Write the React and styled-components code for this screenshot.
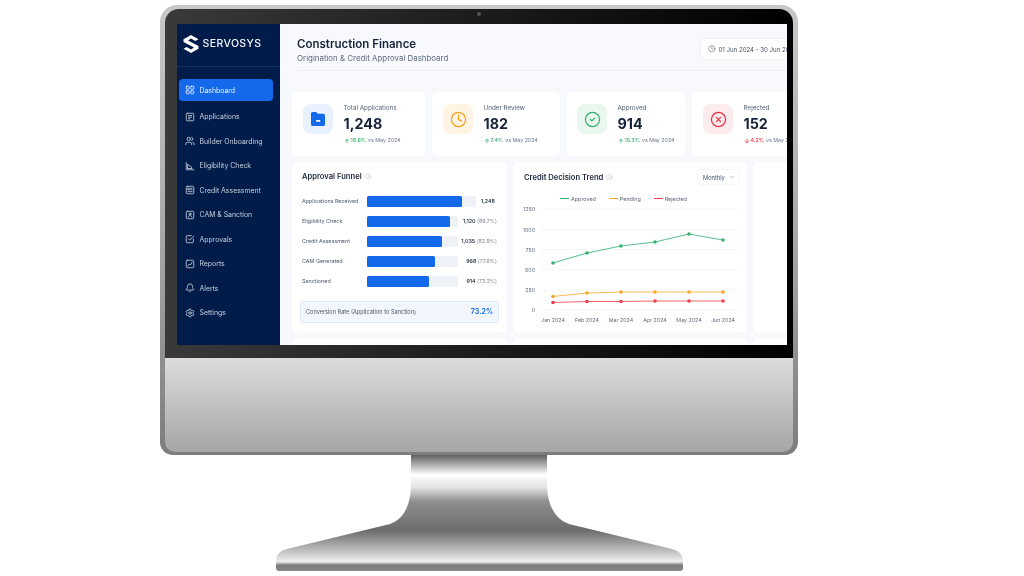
import styled, { createGlobalStyle } from "styled-components";
import {
  LayoutGrid,
  Users,
  Bell,
  Settings,
  Clock,
  CircleCheck,
  CircleX,
  Info,
  ArrowUp,
  ArrowDown,
  ChevronDown,
} from "lucide-react";

// small square nav icons, none of the packages has these exact ones
function NavGlyph({ children }) {
  return (
    <svg
      width="10"
      height="10"
      viewBox="0 0 24 24"
      fill="none"
      stroke="currentColor"
      strokeWidth="2"
      strokeLinecap="round"
      strokeLinejoin="round"
    >
      {children}
    </svg>
  );
}

const ApplicationsIcon = () => (
  <NavGlyph>
    <rect x="3" y="3" width="18" height="18" rx="2.5" />
    <path d="M8 8.5h8M8 12.5h8M8 16.5h4" />
  </NavGlyph>
);
const EligibilityIcon = () => (
  <NavGlyph>
    <path d="M3 3v18h18" />
    <path d="M7 8l4 4 2 0 4 5v1H7z" />
  </NavGlyph>
);
const CreditIcon = () => (
  <NavGlyph>
    <rect x="3" y="3" width="18" height="18" rx="2.5" />
    <path d="M7.5 7.5h4v4h-4zM14 8h3M14 11.5h3M7.5 16h9.5" />
  </NavGlyph>
);
const CamIcon = () => (
  <NavGlyph>
    <rect x="3" y="3" width="18" height="18" rx="2.5" />
    <circle cx="12" cy="9.5" r="2.5" />
    <path d="M7.5 17c.5-2.5 2-3.5 4.5-3.5s4 1 4.5 3.5" />
  </NavGlyph>
);
const ApprovalsIcon = () => (
  <NavGlyph>
    <path d="M20 12v7a2 2 0 0 1-2 2H5a2 2 0 0 1-2-2V6a2 2 0 0 1 2-2h10" />
    <path d="M8 11.5l3.5 3.5L21 5" />
  </NavGlyph>
);
const ReportsIcon = () => (
  <NavGlyph>
    <rect x="3" y="3" width="18" height="18" rx="2.5" />
    <path d="M7 17l3.5-5 2.5 2.5L17 8" />
  </NavGlyph>
);

const navItems = [
  { label: "Dashboard", icon: () => <LayoutGrid size={10} strokeWidth={2} />, active: true },
  { label: "Applications", icon: ApplicationsIcon },
  { label: "Builder Onboarding", icon: () => <Users size={10} strokeWidth={2} /> },
  { label: "Eligibility Check", icon: EligibilityIcon },
  { label: "Credit Assessment", icon: CreditIcon },
  { label: "CAM & Sanction", icon: CamIcon },
  { label: "Approvals", icon: ApprovalsIcon },
  { label: "Reports", icon: ReportsIcon },
  { label: "Alerts", icon: () => <Bell size={10} strokeWidth={2} /> },
  { label: "Settings", icon: () => <Settings size={10} strokeWidth={2} /> },
];

const funnel = [
  { label: "Applications Received", value: "1,248", pct: "", track: 109, fill: 95 },
  { label: "Eligibility Check", value: "1,120", pct: "(89.7%)", track: 91, fill: 83 },
  { label: "Credit Assessment", value: "1,035", pct: "(82.9%)", track: 91, fill: 75 },
  { label: "CAM Generated", value: "968", pct: "(77.6%)", track: 91, fill: 68 },
  { label: "Sanctioned", value: "914", pct: "(73.2%)", track: 91, fill: 62 },
];

const months = ["Jan 2024", "Feb 2024", "Mar 2024", "Apr 2024", "May 2024", "Jun 2024"];
const pointX = [40, 74, 108, 142, 176, 210];
const series = [
  { color: "#35b274", y: [58, 48, 41, 37, 29, 35] },
  { color: "#f9a825", y: [91.5, 88, 87, 87, 87, 87] },
  { color: "#ef3e4a", y: [97.5, 96.5, 96.5, 96, 96, 96] },
];
const ticks = [
  { label: "1250", y: 4 },
  { label: "1000", y: 24.5 },
  { label: "750", y: 44.5 },
  { label: "500", y: 64.5 },
  { label: "250", y: 85 },
  { label: "0", y: 105 },
];

function FolderIcon() {
  return (
    <svg width="14" height="14" viewBox="0 0 14 14">
      <path
        d="M1.6 0h3.6l1.6 1.8h5.6A1.6 1.6 0 0 1 14 3.4v9A1.6 1.6 0 0 1 12.4 14H1.6A1.6 1.6 0 0 1 0 12.4V1.6A1.6 1.6 0 0 1 1.6 0z"
        fill="#1469ea"
      />
      <rect x="5" y="8" width="4.4" height="1.8" rx="0.9" fill="#fff" />
    </svg>
  );
}

function Logo() {
  return (
    <svg width="16" height="18" viewBox="0 0 16 18">
      <path
        d="M8 0 15.5 4.3 12.3 6.1 8 3.6 5 5.4 15.5 11V13.7L8 18 .5 13.7 3.7 11.9 8 14.4 11 12.6 .5 7V4.3z"
        fill="#fff"
      />
    </svg>
  );
}

function Stand() {
  return (
    <StandArt width="407" height="116" viewBox="0 0 407 116">
      <defs>
        <linearGradient id="metal" x1="0" y1="0" x2="0" y2="1">
          <stop offset="0" stopColor="#5f5f5f" />
          <stop offset="0.17" stopColor="#ffffff" />
          <stop offset="0.28" stopColor="#e2e2e2" />
          <stop offset="0.4" stopColor="#8f8f8f" />
          <stop offset="0.65" stopColor="#6c6c6c" />
          <stop offset="0.78" stopColor="#a8a8a8" />
          <stop offset="0.92" stopColor="#eeeeee" />
          <stop offset="0.95" stopColor="#7a7a7a" />
          <stop offset="1" stopColor="#8a8a8a" />
        </linearGradient>
      </defs>
      <path
        d="M135 0H271V28C271 50 279 64 293 69L396 94Q407 97 407 105V113Q407 116 404 116H3Q0 116 0 113V105Q0 97 11 94L114 69C128 64 135 50 135 28Z"
        fill="url(#metal)"
      />
    </StandArt>
  );
}

function StatCard({ icon, tint, label, value, delta, down }) {
  const Arrow = down ? ArrowDown : ArrowUp;
  return (
    <Card>
      <IconTile $tint={tint}>{icon}</IconTile>
      <CardText>
        <CardLabel>{label}</CardLabel>
        <CardValue>{value}</CardValue>
        <Delta>
          <DeltaValue $down={down}>
            <Arrow size={6} strokeWidth={3} />
            {delta}
          </DeltaValue>
          vs May 2024
        </Delta>
      </CardText>
    </Card>
  );
}

function TrendChart() {
  return (
    <ChartArt width="234" height="125" viewBox="0 0 234 125">
      {ticks.map((t) => (
        <g key={t.label}>
          <line x1="27" x2="225" y1={t.y} y2={t.y} stroke="#f0f2f6" strokeWidth="0.7" />
          <text x="22" y={t.y + 2} textAnchor="end">
            {t.label}
          </text>
        </g>
      ))}
      {series.map((s) => (
        <g key={s.color}>
          <polyline
            points={s.y.map((y, i) => `${pointX[i]},${y}`).join(" ")}
            fill="none"
            stroke={s.color}
            strokeWidth="1.1"
            strokeOpacity="0.8"
          />
          {s.y.map((y, i) => (
            <circle key={i} cx={pointX[i]} cy={y} r="1.8" fill={s.color} />
          ))}
        </g>
      ))}
      {months.map((m, i) => (
        <text key={m} x={pointX[i]} y="116.5" textAnchor="middle">
          {m}
        </text>
      ))}
    </ChartArt>
  );
}

export default function App() {
  return (
    <Page>
      <GlobalStyle />
      <Monitor>
        <Bezel>
          <Camera />
          <Screen>
            <Sidebar>
              <Brand>
                <Logo />
                <BrandName>SERVOSYS</BrandName>
              </Brand>
              <Nav>
                {navItems.map((item) => (
                  <NavItem key={item.label} $active={item.active}>
                    <item.icon />
                    {item.label}
                  </NavItem>
                ))}
              </Nav>
            </Sidebar>
            <Main>
              <Header>
                <div>
                  <Title>Construction Finance</Title>
                  <Subtitle>Origination &amp; Credit Approval Dashboard</Subtitle>
                </div>
                <DateBox>
                  <Clock size={7.5} strokeWidth={1.6} />
                  01 Jun 2024 - 30 Jun 2024
                </DateBox>
              </Header>
              <Cards>
                <StatCard
                  icon={<FolderIcon />}
                  tint="#eaf1fe"
                  label="Total Applications"
                  value="1,248"
                  delta="18.6%"
                />
                <StatCard
                  icon={<Clock size={17} strokeWidth={1.8} color="#f9a01b" />}
                  tint="#fff3e4"
                  label="Under Review"
                  value="182"
                  delta="7.4%"
                />
                <StatCard
                  icon={<CircleCheck size={17} strokeWidth={1.7} color="#2fae6d" />}
                  tint="#e9f7ef"
                  label="Approved"
                  value="914"
                  delta="15.3%"
                />
                <StatCard
                  icon={<CircleX size={17} strokeWidth={1.8} color="#ee2f3c" />}
                  tint="#fdecee"
                  label="Rejected"
                  value="152"
                  delta="4.2%"
                  down
                />
              </Cards>
              <Panels>
                <Panel>
                  <PanelTitle>
                    Approval Funnel
                    <Info size={6.5} strokeWidth={1.5} color="#a8b0bd" />
                  </PanelTitle>
                  <FunnelRows>
                    {funnel.map((row) => (
                      <FunnelRow key={row.label}>
                        <FunnelLabel>{row.label}</FunnelLabel>
                        <Track $width={row.track}>
                          <Fill style={{ width: row.fill }} />
                        </Track>
                        <FunnelValue $bare={!row.pct}>
                          <strong>{row.value}</strong> {row.pct}
                        </FunnelValue>
                      </FunnelRow>
                    ))}
                  </FunnelRows>
                  <Conversion>
                    Conversion Rate (Application to Sanction)
                    <ConversionValue>73.2%</ConversionValue>
                  </Conversion>
                </Panel>
                <Panel>
                  <TrendHead>
                    <PanelTitle>
                      Credit Decision Trend
                      <Info size={6.5} strokeWidth={1.5} color="#a8b0bd" />
                    </PanelTitle>
                    <Select>
                      Monthly
                      <ChevronDown size={6.5} strokeWidth={1.5} />
                    </Select>
                  </TrendHead>
                  <Legend>
                    <LegendItem $color="#35b274">Approved</LegendItem>
                    <LegendItem $color="#f9a825">Pending</LegendItem>
                    <LegendItem $color="#ef3e4a">Rejected</LegendItem>
                  </Legend>
                  <TrendChart />
                </Panel>
                <Panel />
                <Panel />
                <Panel />
                <Panel />
              </Panels>
            </Main>
          </Screen>
        </Bezel>
        <Chin />
      </Monitor>
      <Stand />
    </Page>
  );
}

const GlobalStyle = createGlobalStyle`
  html, body {
    margin: 0;
    background: #fff;
    font-family: Inter, "Liberation Sans", sans-serif;
  }
`;

const Page = styled.div`
  width: 1024px;
  height: 576px;
  overflow: hidden;
  padding: 5px 0 0 160px;
  box-sizing: border-box;
  background: #fff;
`;

const Monitor = styled.div`
  width: 638px;
  height: 450px;
  box-sizing: border-box;
  padding: 4px 5px 3px 5px;
  display: flex;
  flex-direction: column;
  border-radius: 17px 17px 13px 13px;
  background: linear-gradient(180deg, #c8c8c8 0%, #a9a9a9 50%, #7d7d7d 100%);
`;

const Bezel = styled.div`
  position: relative;
  height: 349px;
  box-sizing: border-box;
  padding: 15px 6px 13px 12px;
  border-radius: 14px 14px 0 0;
  background: linear-gradient(90deg, #3a3a3a 0%, #1c1c1c 50%, #000 100%);
`;

const Camera = styled.span`
  position: absolute;
  top: 3px;
  left: 312px;
  width: 4px;
  height: 4px;
  border-radius: 50%;
  background: #555;
`;

const Chin = styled.div`
  flex: 1;
  border-radius: 0 0 10px 10px;
  background: linear-gradient(180deg, #dcdcdc 0%, #a6a6a6 100%);
`;

const StandArt = styled.svg`
  display: block;
  margin-left: 116px;
`;

const Screen = styled.div`
  width: 610px;
  height: 321px;
  display: flex;
  overflow: hidden;
  background: #f7f9fd;
  filter: blur(0.45px);
`;

const Sidebar = styled.aside`
  width: 103px;
  flex-shrink: 0;
  background: #021c4a;
`;

const Brand = styled.div`
  height: 43px;
  box-sizing: border-box;
  padding: 0 0 3px 6px;
  display: flex;
  align-items: center;
  gap: 3.5px;
  border-bottom: 1px solid #12305f;
`;

const BrandName = styled.span`
  font-size: 10.5px;
  font-weight: 500;
  letter-spacing: 0.4px;
  color: #f2f5fa;
`;

const Nav = styled.nav`
  display: flex;
  flex-direction: column;
  gap: 2.5px;
  padding: 11.5px 7px 0 2px;
`;

const NavItem = styled.div`
  height: 22px;
  box-sizing: border-box;
  display: flex;
  align-items: center;
  gap: 4.5px;
  padding: 1.5px 0 0 6px;
  border-radius: 4px;
  font-size: 6.9px;
  color: ${(p) => (p.$active ? "#e8f0ff" : "#c6d0df")};
  background: ${(p) => (p.$active ? "#1469ea" : "transparent")};
  &:first-child {
    margin-bottom: 2px;
  }
`;

const Main = styled.main`
  flex: 1;
  min-width: 0;
  padding-left: 12px;
`;

const Header = styled.header`
  height: 47px;
  box-sizing: border-box;
  margin-left: 5px;
  display: flex;
  justify-content: space-between;
  align-items: flex-start;
  padding-top: 13px;
  border-bottom: 1px solid #eceff4;
`;

const Title = styled.h1`
  margin: 0;
  font-size: 11.5px;
  line-height: 14px;
  font-weight: 600;
  color: #16233a;
`;

const Subtitle = styled.p`
  margin: 0.5px 0 0;
  font-size: 7.9px;
  line-height: 12px;
  color: #5f6b7e;
`;

const DateBox = styled.div`
  flex-shrink: 0;
  width: 110px;
  height: 20px;
  margin-top: 2px;
  margin-right: -24px;
  box-sizing: border-box;
  padding-left: 7px;
  display: flex;
  align-items: center;
  gap: 3px;
  white-space: nowrap;
  font-size: 6.1px;
  color: #465266;
  background: #fff;
  border-radius: 4px;
  box-shadow: 0 0 2px rgba(40, 60, 100, 0.12);
`;

const Cards = styled.section`
  display: grid;
  grid-template-columns: 134px 128px 120px 121px;
  gap: 6px;
  margin-top: 21px;
`;

const Card = styled.article`
  height: 64px;
  box-sizing: border-box;
  padding: 12px 0 0 11px;
  display: flex;
  gap: 10.5px;
  background: #fff;
  border-radius: 5px;
  box-shadow: 0 0 2px rgba(40, 60, 100, 0.06);
`;

const IconTile = styled.div`
  width: 30px;
  height: 30px;
  flex-shrink: 0;
  display: flex;
  align-items: center;
  justify-content: center;
  border-radius: 8px;
  background: ${(p) => p.$tint};
`;

const CardText = styled.div`
  white-space: nowrap;
`;

const CardLabel = styled.div`
  font-size: 6.3px;
  line-height: 8px;
  color: #556175;
`;

const CardValue = styled.div`
  font-size: 14.3px;
  line-height: 18px;
  margin-top: 3px;
  font-weight: 700;
  color: #16233a;
`;

const Delta = styled.div`
  display: flex;
  align-items: center;
  gap: 2px;
  margin-top: 4px;
  font-size: 5.3px;
  line-height: 7px;
  color: #6a7587;
`;

const DeltaValue = styled.span`
  display: flex;
  align-items: center;
  gap: 1px;
  font-weight: 500;
  color: ${(p) => (p.$down ? "#ee2f3c" : "#2fae6d")};
`;

const Panels = styled.section`
  display: grid;
  grid-template-columns: 215px 234px 215px;
  grid-auto-rows: 171px;
  gap: 5px 6px;
  margin-top: 6px;
`;

const Panel = styled.article`
  box-sizing: border-box;
  padding: 8px 8px 0;
  background: #fff;
  border-radius: 5px;
  box-shadow: 0 0 2px rgba(40, 60, 100, 0.06);
`;

const PanelTitle = styled.h2`
  margin: 0;
  padding-left: 2px;
  height: 13px;
  display: flex;
  align-items: center;
  gap: 3px;
  font-size: 7.6px;
  font-weight: 600;
  color: #222d40;
`;

const FunnelRows = styled.div`
  margin-top: 8px;
`;

const FunnelRow = styled.div`
  height: 20px;
  display: flex;
  align-items: center;
  padding: 0 2px;
`;

const FunnelLabel = styled.div`
  width: 65px;
  flex-shrink: 0;
  white-space: nowrap;
  font-size: 5.4px;
  color: #4d596c;
`;

const Track = styled.div`
  width: ${(p) => p.$width}px;
  height: 11px;
  flex-shrink: 0;
  border-radius: 1.5px;
  background: #eef1f6;
`;

const Fill = styled.div`
  height: 100%;
  border-radius: 1.5px;
  background: #1469ea;
`;

const FunnelValue = styled.div`
  flex: 1;
  text-align: right;
  white-space: nowrap;
  font-size: 5.3px;
  color: #7b8596;
  padding-right: ${(p) => (p.$bare ? 2 : 0)}px;
  strong {
    font-weight: 600;
    color: #2b3648;
  }
`;

const Conversion = styled.div`
  height: 20px;
  margin-top: 9.5px;
  padding: 0 5px;
  display: flex;
  align-items: center;
  justify-content: space-between;
  font-size: 5.6px;
  color: #4d596c;
  background: #f2f6fe;
  border: 1px solid #dfe8f9;
  border-radius: 3px;
`;

const ConversionValue = styled.span`
  font-size: 7px;
  font-weight: 700;
  color: #1f6fe8;
`;

const TrendHead = styled.div`
  display: flex;
  justify-content: space-between;
  align-items: center;
  padding-left: 1px;
`;

const Select = styled.div`
  width: 41px;
  height: 14px;
  box-sizing: border-box;
  padding: 0 4px 0 5px;
  display: flex;
  align-items: center;
  justify-content: space-between;
  font-size: 5.7px;
  color: #465266;
  background: #fff;
  border-radius: 3px;
  box-shadow: 0 0 2px rgba(40, 60, 100, 0.18);
`;

const Legend = styled.div`
  display: flex;
  justify-content: center;
  gap: 13px;
  margin: 9.5px 0 0 -13px;
  height: 10px;
  align-items: center;
`;

const LegendItem = styled.span`
  display: flex;
  align-items: center;
  gap: 2px;
  font-size: 5.4px;
  color: #5b6678;
  &::before {
    content: "";
    width: 9px;
    height: 1.2px;
    background: ${(p) => p.$color};
  }
`;

const ChartArt = styled.svg`
  display: block;
  margin: 1.5px 0 0 -8px;
  text {
    font-size: 5.3px;
    fill: #5f6a7c;
  }
`;
